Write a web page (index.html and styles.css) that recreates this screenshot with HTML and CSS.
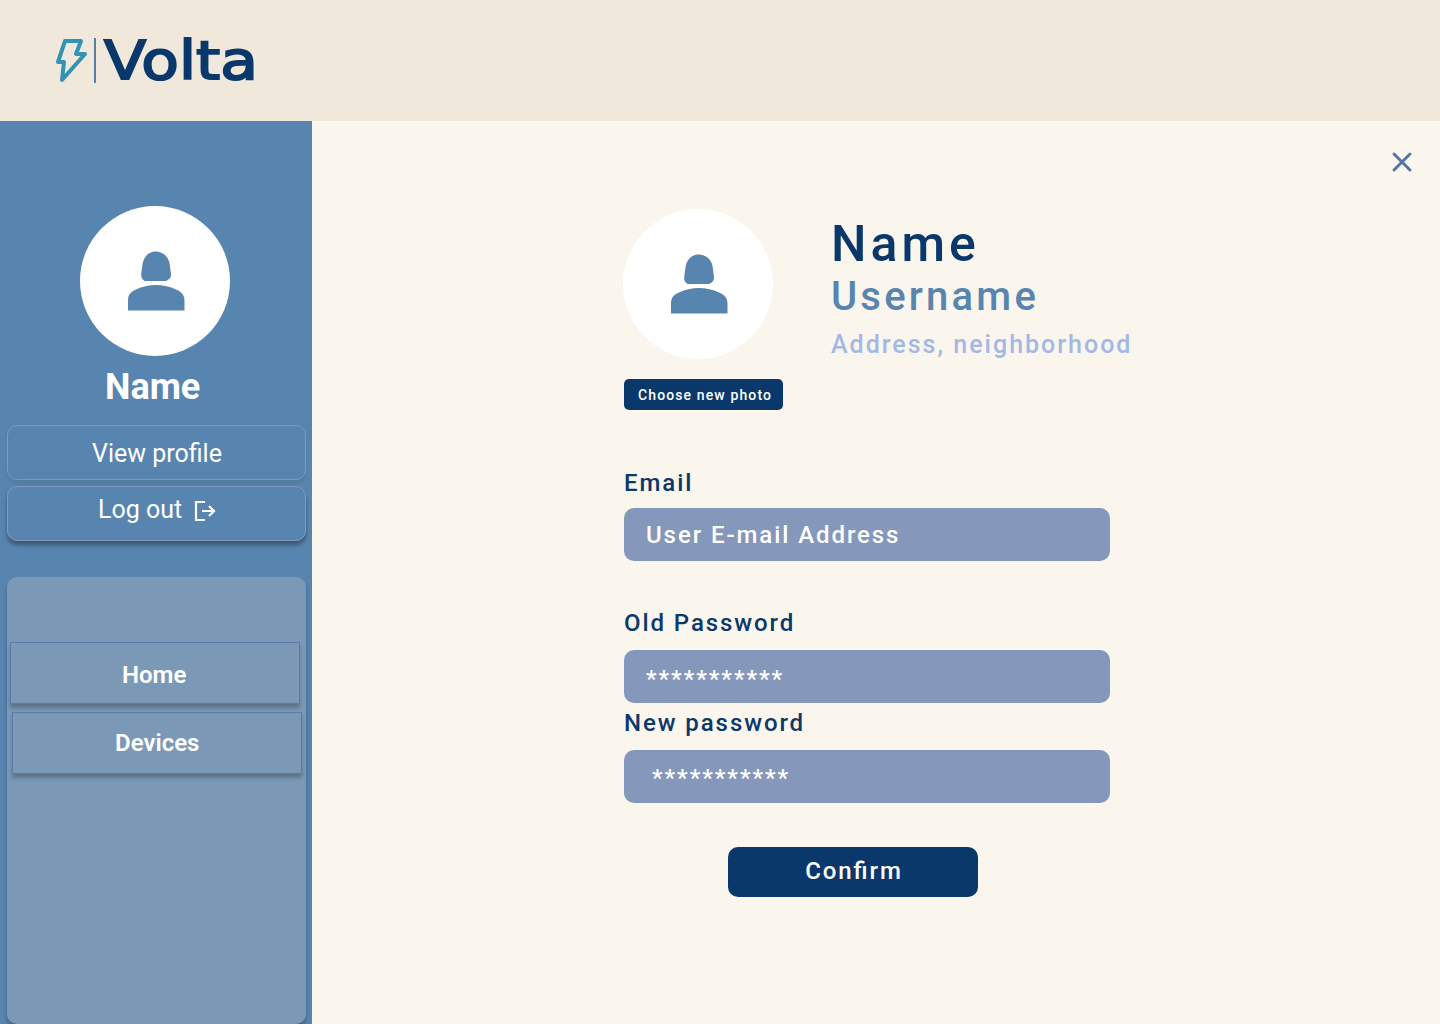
FILE: index.html
```html
<!DOCTYPE html>
<html lang="en">
<head>
<meta charset="utf-8">
<title>Volta</title>
<link rel="stylesheet" href="styles.css">
</head>
<body>
<svg class="defs" width="0" height="0"><symbol id="person" viewBox="0 0 150 150"><path d="M64.500 75 Q60.500 72.500 61.300 67 L62.700 57 C64.500 49.500 69.500 45.500 75.500 45.500 C82 45.500 88 49.500 89.500 57 L91 68 Q91.500 73 86 75Z"/><path d="M48 104.500 V95 C48 89 50 86 56 83.500 C68 77.500 84 77.500 96 83.500 C102 86 104.500 89 104.500 95 V104.500Z"/></symbol></svg>
<header class="topbar">
  <svg class="bolt" width="34" height="48" viewBox="0 0 34 48"><path d="M11 5 H27 L22 18 H31 L8 44 L10 26 H4Z"/></svg>
  <span class="divider"></span>
  <span class="wordmark">Volta</span>
</header>
<div class="layout">
  <aside class="sidebar">
    <svg class="avatar" viewBox="0 0 150 150"><circle cx="75" cy="75" r="75"/><use href="#person"/></svg>
    <div class="side-name">Name</div>
    <button class="side-btn profile">View profile</button>
    <button class="side-btn logout">Log out
      <svg width="24" height="24" viewBox="0 0 24 24"><path d="M12 3 H3 V21 H12 M9 12 H21 M16 7 L21 12 L16 17"/></svg>
    </button>
    <nav class="menu">
      <a class="menu-item home">Home</a>
      <a class="menu-item devices">Devices</a>
    </nav>
  </aside>
  <main class="content">
    <svg class="close" width="22" height="22" viewBox="0 0 22 22"><path d="M3 3 L19 19 M19 3 L3 19"/></svg>
    <section class="profile-head">
      <svg class="avatar" viewBox="0 0 150 150"><circle cx="75" cy="75" r="75"/><use href="#person"/></svg>
      <div class="identity">
        <h1>Name</h1>
        <h2>Username</h2>
        <p>Address, neighborhood</p>
      </div>
    </section>
    <button class="photo-btn">Choose new photo</button>
    <form class="form">
      <label class="email-label">Email</label>
      <div class="field">User E-mail Address</div>
      <label class="old-label">Old Password</label>
      <div class="field old">***********</div>
      <label class="new-label">New password</label>
      <div class="field new">***********</div>
      <button class="confirm" type="button">Confirm</button>
    </form>
  </main>
</div>
</body>
</html>
```
FILE: styles.css
```css
* { box-sizing: border-box; }
body { margin: 0; height: 1024px; overflow: hidden; font-family: Roboto, sans-serif; background: #faf6ee; }
button { font-family: inherit; border: 0; padding: 0; margin: 0; }
svg { display: block; flex: none; }
.defs { position: absolute; }

.topbar { height: 121px; background: #f0e8da; display: flex; align-items: flex-start; padding: 36px 0 0 54px; }
.bolt { fill: none; stroke: #3193b5; stroke-width: 4; stroke-linejoin: round; }
.divider { width: 1.5px; height: 45px; margin: 2px 0 0 6px; background: #5a7da3; }
.wordmark { margin: -7px 0 0 8px; font: 54px/64px "DejaVu Sans", sans-serif; color: #0a386b; -webkit-text-stroke: 2px #0a386b; transform: scaleX(1.14); transform-origin: left; }

.layout { display: flex; height: 903px; }
.sidebar { width: 312px; flex: none; background: #5885af; padding: 85px 6px 0 7px; display: flex; flex-direction: column; }
.avatar { width: 150px; height: 150px; fill: #5885af; }
.avatar circle { fill: #fff; }
.sidebar .avatar { margin-left: 73px; }
.side-name { margin: 10px 0 0 98px; height: 42px; font-size: 36px; line-height: 42px; font-weight: 700; color: #fff; }
.side-btn { flex: none; height: 55px; border: 1px solid #8597bb; border-radius: 10px; background: #5885af; color: #fff; font-size: 25px; line-height: 29px; display: flex; }
.profile { margin-top: 17px; padding: 13px 0 0 84px; box-shadow: 0 4px 4px rgba(0,0,0,.08); }
.logout { margin-top: 6px; padding: 8px 0 0 90px; box-shadow: 0 4px 4px rgba(0,0,0,.35); }
.logout svg { margin: 4px 0 0 11px; fill: none; stroke: #fff; stroke-width: 2.2; }
.menu { margin-top: 36px; height: 447px; border-radius: 10px; background: #7b99b7; padding: 65px 0 0 3px; box-shadow: 0 4px 4px rgba(0,0,0,.25); }
.menu-item { display: block; width: 290px; height: 62px; border: 1px solid #5a7aa8; color: #fff; font-size: 24px; line-height: 28px; font-weight: 600; background: #7b99b7; box-shadow: 0 4px 4px rgba(0,0,0,.25); }
.home { padding: 18px 0 0 111px; }
.devices { margin: 8px 0 0 2px; padding: 16px 0 0 102px; }

.content { flex: 1; padding: 30px 0 0 311px; }
.close { margin-left: 768px; stroke: #5576a5; stroke-width: 3; stroke-linecap: round; }
.profile-head { display: flex; margin-top: 36px; height: 150px; }
.identity { margin-left: 58px; padding-top: 5px; font-weight: 500; white-space: nowrap; }
.identity h1, .identity h2, .identity p { margin: 0; font-weight: 500; }
.identity h1 { font-size: 50px; line-height: 60px; letter-spacing: 4px; color: #0a386b; }
.identity h2 { font-size: 40px; line-height: 46px; letter-spacing: 3.2px; color: #5885af; }
.identity p { margin-top: 10px; font-size: 25px; line-height: 30px; letter-spacing: 2px; color: #a4b8e4; }
.photo-btn { display: block; margin: 20px 0 0 1px; width: 159px; height: 31px; border-radius: 5px; background: #0a386b; color: #fff; font-size: 14px; font-weight: 500; letter-spacing: 1.12px; text-align: left; padding-left: 14px; }
.form { width: 487px; padding-left: 1px; display: flex; flex-direction: column; font-weight: 500; font-size: 24px; line-height: 28px; letter-spacing: 1.92px; }
.form label { color: #0a386b; }
.email-label { margin-top: 59px; }
.old-label { margin-top: 48px; }
.new-label { margin-top: 6px; }
.field { margin-top: 11px; height: 53px; border-radius: 10px; background: #8597bb; color: #fff; padding: 13px 0 0 22px; }
.field.old { margin-top: 13px; padding-top: 15px; }
.field.new { margin-top: 13px; padding: 14px 0 0 28px; }
.confirm { margin: 44px 0 0 104px; width: 250px; height: 50px; border-radius: 10px; background: #0a386b; color: #fff; font-size: 24px; font-weight: 500; letter-spacing: 1.92px; font-feature-settings: "liga" 1; padding: 0 0 2px 2px; }
```
